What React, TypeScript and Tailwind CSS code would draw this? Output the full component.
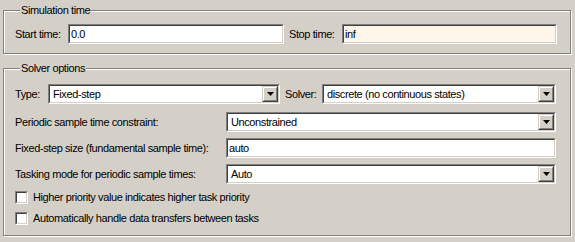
import React from "react"

const Sunken: React.FC<{ className?: string; bg?: string; children?: React.ReactNode }> = ({ className = "", bg = "bg-white", children }) => (
  <div className={`h-[20px] border border-t-[#808080] border-l-[#808080] border-b-white border-r-white ${className}`}>
    <div className={`h-full border border-t-[#404040] border-l-[#404040] border-b-[#d4d0c8] border-r-[#d4d0c8] flex items-center ${bg}`}>
      {children}
    </div>
  </div>
)

const TextBox: React.FC<{ value: string; className?: string; bg?: string }> = ({ value, className, bg }) => (
  <Sunken className={className} bg={bg}>
    <span className="pl-[1px] leading-[14px]">{value}</span>
  </Sunken>
)

const Combo: React.FC<{ value: string; className?: string }> = ({ value, className }) => (
  <Sunken className={className}>
    <span className="flex-1 pl-[3px] leading-[14px] truncate">{value}</span>
    <div className="w-[16px] h-[16px] border border-t-[#d4d0c8] border-l-[#d4d0c8] border-b-[#404040] border-r-[#404040]">
      <div className="h-full border border-t-white border-l-white border-b-[#808080] border-r-[#808080] bg-[#d4d0c8] flex items-center justify-center">
        <svg width="7" height="4" viewBox="0 0 7 4">
          <path d="M0 0h7L3.5 4z" fill="#000" />
        </svg>
      </div>
    </div>
  </Sunken>
)

const Check: React.FC<{ label: string }> = ({ label }) => (
  <div className="flex items-center h-[13px] gap-[5px]">
    <div className="w-[13px] h-[13px] border border-t-[#808080] border-l-[#808080] border-b-white border-r-white">
      <div className="w-full h-full border border-t-[#404040] border-l-[#404040] border-b-[#d4d0c8] border-r-[#d4d0c8] bg-white" />
    </div>
    <span className="leading-[13px]">{label}</span>
  </div>
)

const Group: React.FC<{ title: string; className?: string; children: React.ReactNode }> = ({ title, className = "", children }) => (
  <fieldset className={`ml-[3px] w-[568px] min-w-0 border border-[#808080] shadow-[inset_1px_1px_0_#fff,1px_1px_0_#fff] px-[11px] m-0 ${className}`}>
    <legend className="ml-[5px] px-[1px] leading-[13px] bg-[#d4d0c8]">{title}</legend>
    {children}
  </fieldset>
)

export default function App() {
  return (
    <div className="w-[575px] h-[242px] bg-[#d4d0c8] text-black text-[11px] tracking-[-0.4px] font-['Liberation_Sans',Arial,sans-serif] pt-[4px] overflow-hidden">
      <Group title="Simulation time" className="pt-[7px] pb-[9px]">
        <div className="flex items-center">
          <span className="w-[53px]">Start time:</span>
          <TextBox value="0.0" className="w-[216px]" />
          <span className="ml-[5px] w-[53px]">Stop time:</span>
          <TextBox value="inf" className="w-[215px]" bg="bg-[#fdf6e8]" />
        </div>
      </Group>

      <Group title="Solver options" className="mt-[8px] pt-[9px] pb-[10px]">
        <div className="flex flex-col">
          <div className="flex items-center">
            <span className="w-[33px]">Type:</span>
            <Combo value="Fixed-step" className="w-[232px]" />
            <span className="ml-[5px] w-[37px]">Solver:</span>
            <Combo value="discrete (no continuous states)" className="w-[234px]" />
          </div>
          <div className="flex items-center mt-[8px]">
            <span className="w-[211px]">Periodic sample time constraint:</span>
            <Combo value="Unconstrained" className="w-[330px]" />
          </div>
          <div className="flex items-center mt-[6px]">
            <span className="w-[211px]">Fixed-step size (fundamental sample time):</span>
            <TextBox value="auto" className="w-[330px]" />
          </div>
          <div className="flex items-center mt-[6px]">
            <span className="w-[211px]">Tasking mode for periodic sample times:</span>
            <Combo value="Auto" className="w-[330px]" />
          </div>
          <div className="flex flex-col gap-[8px] mt-[7px]">
            <Check label="Higher priority value indicates higher task priority" />
            <Check label="Automatically handle data transfers between tasks" />
          </div>
        </div>
      </Group>
    </div>
  )
}
